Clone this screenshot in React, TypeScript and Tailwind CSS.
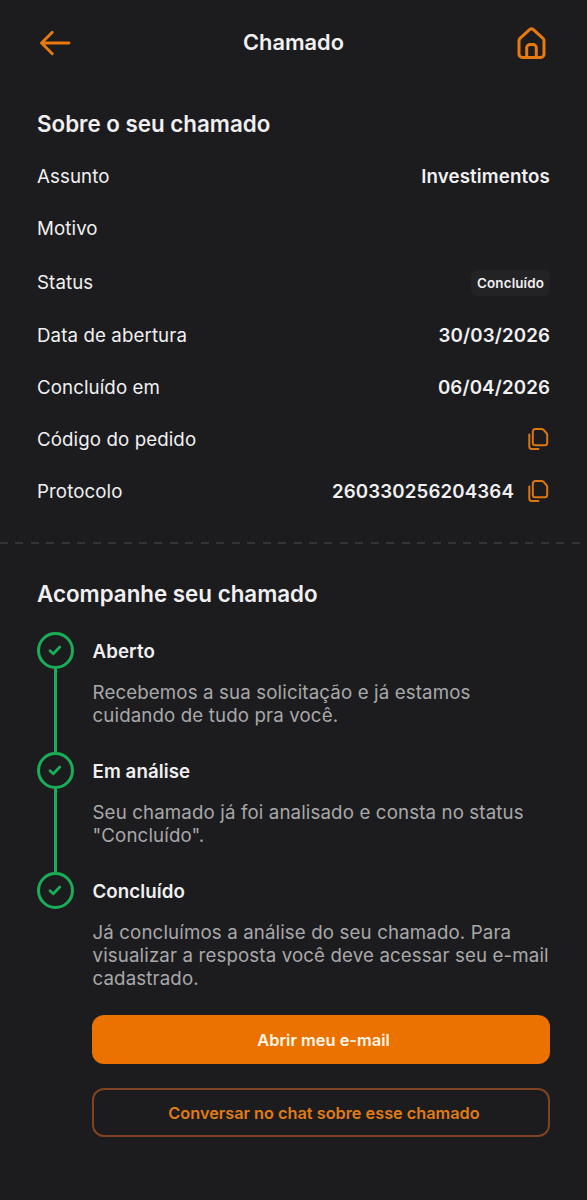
import type { ReactNode } from 'react'

const STEPS = [
  {
    title: 'Aberto',
    lines: ['Recebemos a sua solicitação e já estamos', 'cuidando de tudo pra você.'],
  },
  {
    title: 'Em análise',
    lines: ['Seu chamado já foi analisado e consta no status', '"Concluído".'],
  },
  {
    title: 'Concluído',
    lines: ['Já concluímos a análise do seu chamado. Para', 'visualizar a resposta você deve acessar seu e-mail', 'cadastrado.'],
  },
]

function BackIcon() {
  return (
    <svg width="32" height="26" viewBox="0 0 32 26" fill="none" stroke="#e6790f" strokeWidth="2.9" strokeLinecap="round" strokeLinejoin="round">
      <path d="M30 13H2.5M13.3 2.3 2.5 13l10.8 10.7" />
    </svg>
  )
}

function HomeIcon() {
  return (
    <svg width="29" height="32" viewBox="0 0 29 32" fill="none" stroke="#e6790f" strokeWidth="3" strokeLinecap="round" strokeLinejoin="round">
      <path d="M12.6 2.6 3 11.4q-1 1-1 2.4V27a3.4 3.4 0 0 0 3.4 3.4h18.2A3.4 3.4 0 0 0 27 27V13.8q0-1.4-1-2.4L16.4 2.6q-1.9-1.6-3.8 0Z" />
      <path d="M9.7 30v-9.2a3.3 3.3 0 0 1 3.3-3.3h3a3.3 3.3 0 0 1 3.3 3.3V30" />
    </svg>
  )
}

function CopyIcon() {
  return (
    <svg width="22" height="24" viewBox="0 0 22 24" fill="none" stroke="#dc7615" strokeWidth="2" strokeLinecap="round" strokeLinejoin="round">
      <path d="M7.3 2h6.2q1.2 0 2.1.9l2.8 3.1q.8.9.8 2.1v7.7a2.5 2.5 0 0 1-2.5 2.5H7.3A2.5 2.5 0 0 1 4.8 15.8V4.5A2.5 2.5 0 0 1 7.3 2Z" />
      <path d="M1.3 7.5v12a2.6 2.6 0 0 0 2.6 2.6h6.6" />
    </svg>
  )
}

function Row({ label, children }: { label: string; children?: ReactNode }) {
  return (
    <div className="flex min-h-6 items-center justify-between">
      <span className="text-[18.7px] leading-6 tracking-[0.1px]">{label}</span>
      <div className="flex items-center text-[18.7px] leading-6 font-semibold tracking-[0.13px]">{children}</div>
    </div>
  )
}

export default function App() {
  return (
    <div className="flex h-[1200px] w-[587px] flex-col overflow-hidden bg-[#1c1c1e] font-['Inter',sans-serif] text-[#f0f0f2]">
      <header className="flex h-[86px] shrink-0 items-center justify-between pr-[41px] pl-[39px]">
        <button aria-label="Voltar"><BackIcon /></button>
        <h1 className="pr-px pb-0.5 text-[21.8px] font-semibold">Chamado</h1>
        <button aria-label="Início"><HomeIcon /></button>
      </header>

      <section className="px-[37px] pt-6">
        <h2 className="text-[22.35px] leading-7 font-semibold">Sobre o seu chamado</h2>
        <div className="mt-[27.2px] flex flex-col gap-[28.2px]">
          <Row label="Assunto">Investimentos</Row>
          <Row label="Motivo" />
          <Row label="Status">
            <span className="flex h-[26px] items-center rounded-md bg-[#232325] px-1.5 text-[13.4px]">Concluído</span>
          </Row>
          <Row label="Data de abertura">30/03/2026</Row>
          <Row label="Concluído em">06/04/2026</Row>
          <Row label="Código do pedido">
            <button className="-mt-0.5" aria-label="Copiar código"><CopyIcon /></button>
          </Row>
          <Row label="Protocolo">
            260330256204364
            <button className="-mt-0.5 ml-[14px]" aria-label="Copiar protocolo"><CopyIcon /></button>
          </Row>
        </div>
      </section>

      {/* Dashed divider */}
      <div className="mt-[37.8px] h-[2px] w-[581px] shrink-0 bg-[repeating-linear-gradient(to_right,#343436_0_8px,transparent_8px_15.45px)]" />

      <section className="px-[37px] pt-[36px]">
        <h2 className="text-[22.35px] leading-7 font-semibold">Acompanhe seu chamado</h2>
        <div className="mt-6">
          {STEPS.map((step, i) => (
            <div key={step.title} className="flex gap-[18.5px]">
              <div className="flex w-[37px] shrink-0 flex-col items-center">
                <div className="flex h-[37px] w-[37px] shrink-0 items-center justify-center rounded-full border-3 border-[#18ae58]">
                  <svg className="mr-px" width="14" height="11" viewBox="0 0 14 11" fill="none" stroke="#18ae58" strokeWidth="2.8" strokeLinecap="round" strokeLinejoin="round">
                    <path d="m2 5.7 3.3 3L11.8 2" />
                  </svg>
                </div>
                {i < STEPS.length - 1 && <div className="w-[3px] grow bg-[#18ae58]" />}
              </div>
              <div className={i < STEPS.length - 1 ? 'h-[120px]' : ''}>
                <h3 className="pt-2 text-[18.7px] leading-6 font-semibold tracking-[0.08px]">{step.title}</h3>
                <p className="mt-[17px] text-[18.7px] leading-[23px] tracking-[0.13px] whitespace-nowrap text-[#a8a8aa]">
                  {step.lines.map(line => <span key={line} className="block">{line}</span>)}
                </p>
              </div>
            </div>
          ))}
        </div>

        <div className="mt-[25px] ml-[55px] flex flex-col gap-6">
          <button className="h-[49px] rounded-xl bg-[#ec7200] pt-px pl-[5px] text-[16.4px] font-semibold text-[#fff6ea]">Abrir meu e-mail</button>
          <button className="h-[49px] rounded-xl border-2 border-[#7f4322] pt-px pl-[6px] text-[16.3px] font-semibold text-[#e07b16]">
            Conversar no chat sobre esse chamado
          </button>
        </div>
      </section>
    </div>
  )
}
